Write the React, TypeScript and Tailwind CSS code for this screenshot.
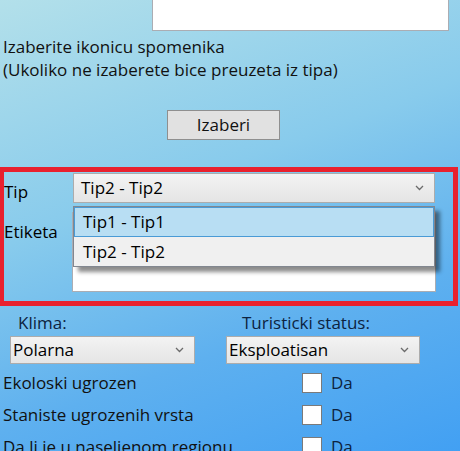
import React from "react";

const font = { fontFamily: '"Open Sans", "Noto Sans", sans-serif' };

function Chevron() {
  return (
    <svg width="9" height="6" viewBox="0 0 9 6" className="shrink-0">
      <polyline points="1,1 4.5,4.5 8,1" fill="none" stroke="#6b6b6b" strokeWidth="1.3" />
    </svg>
  );
}

function Combo({ value, className }: { value: string; className: string }) {
  return (
    <div
      className={`flex shrink-0 items-center justify-between border border-[#acacac] bg-gradient-to-b from-[#f3f3f3] to-[#e5e5e5] pr-[10px] text-[17px] text-black ${className}`}
    >
      <span>{value}</span>
      <Chevron />
    </div>
  );
}

function CheckRow({ label }: { label: string }) {
  return (
    <div className="flex h-[32px] items-center">
      <span className="w-[302px] shrink-0 pl-[3px] text-[17px] text-[#111]">{label}</span>
      <div className="h-[20px] w-[20px] shrink-0 border border-[#7a7a7a] bg-white" />
      <span className="ml-[9px] text-[17px] text-[#0d2340]">Da</span>
    </div>
  );
}

export default function App() {
  return (
    <div
      style={font}
      className="relative h-[451px] w-[460px] overflow-hidden bg-[linear-gradient(160deg,#b3e0ea_0%,#88cbec_40%,#5eb0ef_70%,#42a0f3_100%)]"
    >
      {/* Opis textbox (cut off at top) */}
      <div className="-mt-[2px] ml-[152px] h-[33px] w-[297px] border border-[#abadb3] bg-white" />

      {/* Ikonica text */}
      <div className="mt-[4px] pl-[3px] text-[17px] leading-[23px] text-[#111]">
        <div>Izaberite ikonicu spomenika</div>
        <div>(Ukoliko ne izaberete bice preuzeta iz tipa)</div>
      </div>

      <div className="ml-[167px] mt-[29px] flex h-[30px] w-[113px] items-center justify-center border border-[#8f8f8f] bg-[#e1e1e1] text-[17px] text-[#111]">
        Izaberi
      </div>

      {/* Highlighted section */}
      <div className="mt-[27px] h-[139px] w-[458px] border-[5px] border-l-4 border-[#e8212e]">
        <div className="relative pt-[1px]">
          <div className="grid grid-cols-[69px_362px]">
            <span className="pt-[7px] text-[17px] leading-[23px] text-black">Tip</span>
            <Combo value="Tip2 - Tip2" className="h-[30px] pl-[7px]" />
          </div>
          <div className="mt-[9px] grid grid-cols-[68px_364px]">
            <span className="pt-[8px] text-[17px] leading-[23px] text-black">Etiketa</span>
            <div className="h-[80px] border border-[#abadb3] bg-white" />
          </div>

          {/* Open dropdown */}
          <div className="absolute left-[69px] top-[34px] w-[362px] border border-[#828790] bg-[#f0f0f0] text-[17px] text-black shadow-[5px_5px_4px_rgba(0,0,0,0.45)]">
            <div className="flex h-[30px] items-center border border-[#4a9bd6] bg-[#b8def3] pl-[8px]">Tip1 - Tip1</div>
            <div className="flex h-[29px] items-center pl-[9px]">Tip2 - Tip2</div>
          </div>
        </div>
      </div>

      {/* Klima / Turisticki status */}
      <div className="flex">
        <div className="ml-[10px] flex flex-col">
          <span className="pl-[8px] pt-[6px] text-[17px] leading-[22px] text-[#0d2340]">Klima:</span>
          <Combo value="Polarna" className="mt-[2px] h-[28px] w-[185px] pl-[2px]" />
        </div>
        <div className="ml-[31px] flex flex-col">
          <span className="pl-[16px] pt-[6px] text-[17px] leading-[22px] text-[#0d2340]">Turisticki status:</span>
          <Combo value="Eksploatisan" className="mt-[2px] h-[28px] w-[194px] pl-[2px]" />
        </div>
      </div>

      <div className="mt-[3px]">
        <CheckRow label="Ekoloski ugrozen" />
        <CheckRow label="Staniste ugrozenih vrsta" />
        <CheckRow label="Da li je u naseljenom regionu" />
      </div>
    </div>
  );
}
